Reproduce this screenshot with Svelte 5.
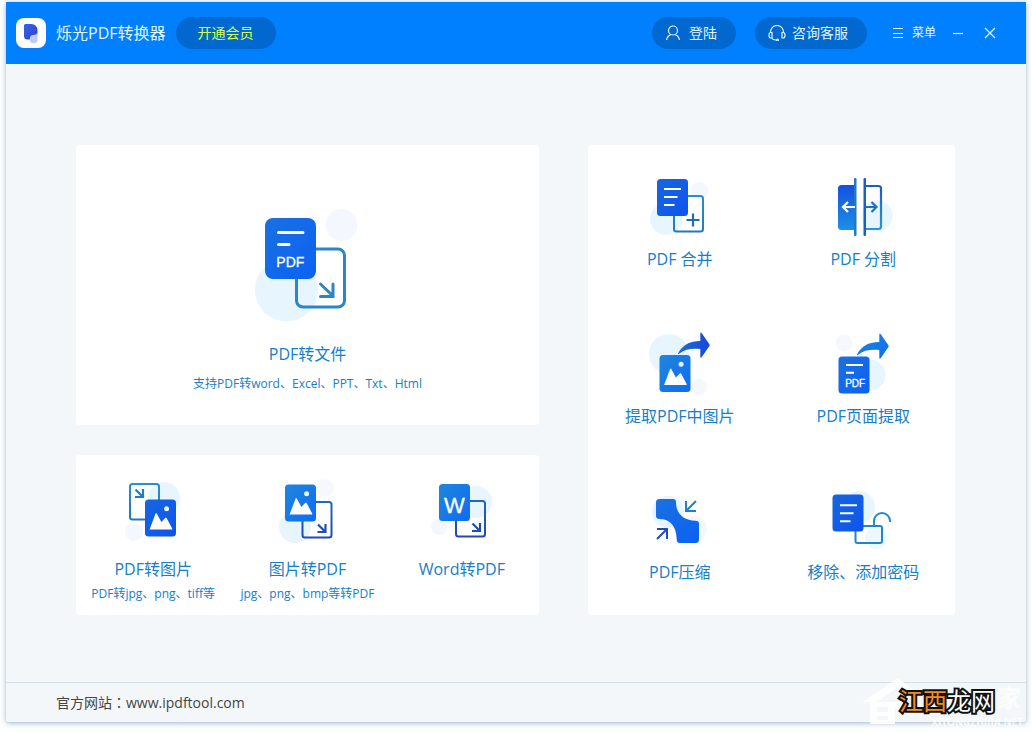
<script lang="ts">
  type Tool = { id: string; title: string; hint?: string };

  const convertTools: Tool[] = [
    { id: "pdf-image", title: "PDF转图片", hint: "PDF转jpg、png、tiff等" },
    { id: "image-pdf", title: "图片转PDF", hint: "jpg、png、bmp等转PDF" },
    { id: "word-pdf", title: "Word转PDF" },
  ];

  const editTools: Tool[] = [
    { id: "merge", title: "PDF 合并" },
    { id: "split", title: "PDF 分割" },
    { id: "extract-image", title: "提取PDF中图片" },
    { id: "extract-page", title: "PDF页面提取" },
    { id: "compress", title: "PDF压缩" },
    { id: "password", title: "移除、添加密码" },
  ];
</script>

{#snippet sheet(x: number, y: number, fill: string)}
  <rect {x} {y} width="31" height="37" rx="3.5" fill="url(#{fill})" />
{/snippet}

{#snippet frame(x: number, y: number, stroke: string)}
  <rect {x} {y} width="29" height="35.5" rx="2.5" fill="none" stroke="url(#{stroke})" stroke-width="2" />
{/snippet}

{#snippet photo(x: number, y: number, fill: string)}
  <g transform="translate({x} {y})">
    {@render sheet(0, 0, fill)}
    <path d="M4.6 30 10.4 14.4Q11.2 12.6 12 14.4L16.4 22.6 20.2 18.4Q21 17.6 21.7 18.8L27.3 29.2Q27.5 30 26.6 30H5Q4.3 30 4.6 29.4z" fill="#fff" />
    <circle cx="21.6" cy="9.2" r="2.5" fill="#e6f5ff" />
  </g>
{/snippet}

{#snippet corner(x: number, y: number, color: string)}
  <path transform="translate({x} {y})" d="M-7.5-7.5 0 0M0-8V0H-8" fill="none" stroke={color} stroke-width="2.2" />
{/snippet}

{#snippet lines(x: number, y: number)}
  <path transform="translate({x} {y})" d="M0 0H17M0 8H13.500M0 16H10.500" stroke="#fff" stroke-width="2" />
{/snippet}

{#snippet share(x: number, y: number, fill: string)}
  <path
    transform="translate({x} {y})"
    d="M0 21C5 12 13 8.500 22.300 8.600V1Q22.500-.8 23.800.8L31.400 11.700Q32 12.600 31.400 13.500L23.800 24.400Q22.500 26 22.300 24.200V16.600C14 15.800 7 16.600.8 21.400Q-.2 21.800 0 21z"
    fill="url(#{fill})"
  />
{/snippet}

{#snippet icon(id: string)}
  <svg class="tool-icon" viewBox="0 0 80 72" aria-hidden="true">
    {#if id === "pdf-image"}
      <circle cx="51" cy="26" r="16" fill="#e6f5fe" />
      <circle cx="21" cy="60" r="9" fill="#f3f7fe" />
      {@render frame(17, 12, "line-light")}
      {@render corner(30, 25, "#1f7cc4")}
      {@render photo(32, 27.5, "fill-deep")}
    {:else if id === "image-pdf"}
      <circle cx="28" cy="55" r="16" fill="#e6f5fe" />
      <circle cx="58" cy="16" r="9" fill="#f6f8fe" />
      {@render frame(35.5, 30, "line-deep")}
      {@render corner(58.5, 60, "#1f4fae")}
      {@render photo(18, 12.5, "fill-light")}
    {:else if id === "word-pdf"}
      <circle cx="54" cy="30" r="16" fill="#e6f5fe" />
      <circle cx="17" cy="55" r="8" fill="#f4f7fe" />
      {@render frame(34, 29, "line-deep")}
      {@render corner(58, 59, "#1f4fae")}
      {@render sheet(17, 12, "fill-light")}
      <text x="32.500" y="41" font-size="22" text-anchor="middle">W</text>
    {:else if id === "merge"}
      <circle cx="26" cy="48" r="16" fill="#e6f5fe" />
      <circle cx="59" cy="20" r="9" fill="#f3f8fe" />
      {@render frame(34, 25, "line-light")}
      {@render sheet(17, 8, "fill-deep")}
      {@render lines(24, 18)}
      <path d="M46.500 49H59.500M53 42.500V55.500" stroke="#1f6cb8" stroke-width="2.200" />
    {:else if id === "split"}
      <circle cx="54" cy="45" r="15.500" fill="#e6f5fe" />
      <path d="M32 14V59H18.500Q15 59 15 55.500V17.500Q15 14 18.500 14z" fill="url(#fill-split)" />
      <rect x="31" y="7" width="2.500" height="58" rx="1" fill="#2378c4" />
      <path d="M42 15H55.500Q58 15 58 17.500V55.500Q58 58 55.500 58H42" fill="none" stroke="url(#line-split)" stroke-width="2.200" />
      <rect x="40.500" y="7" width="2.500" height="58" rx="1" fill="#1d5fc0" />
      <path d="M32 36H20.500M25 31 20 36 25 41" fill="none" stroke="#fff" stroke-width="2.200" />
      <path d="M42 36H53M48.500 31 53.500 36 48.500 41" fill="none" stroke="#1d6fc4" stroke-width="2.200" />
    {:else if id === "extract-image"}
      <circle cx="29" cy="26" r="20" fill="#e6f5fe" />
      <circle cx="59" cy="59" r="8" fill="#f5f7fe" />
      {@render photo(19.5, 27, "fill-light")}
      {@render share(38, 4.5, "fill-arrow")}
    {:else if id === "extract-page"}
      <circle cx="47" cy="47" r="15.500" fill="#e6f5fe" />
      <circle cx="21" cy="15" r="8.500" fill="#f6f8fe" />
      {@render sheet(15.5, 28.5, "fill-page")}
      {@render share(34, 5.5, "fill-light")}
      <path d="M23 37H40M23 44.700H31" stroke="#fff" stroke-width="2" />
      <text x="32.200" y="58.500" font-size="10" text-anchor="middle">PDF</text>
    {:else if id === "compress"}
      <circle cx="28" cy="28" r="16" fill="#e6f5fe" />
      <circle cx="54" cy="45" r="13" fill="#f0f8fe" />
      <path
        d="M19.500 15H33Q36 15 36 18C36 30 44 36.700 55.500 36.700Q59 36.700 59 40V55.500Q59 59 55.500 59H40Q36.700 59 36.700 55.500C36.500 42 30 35 19.500 35Q16 35 16 32V18.500Q16 15 19.500 15z"
        fill="url(#fill-page)"
      />
      <path d="M56 17 46.500 26.500M46 17V27H56" fill="none" stroke="#1f80c8" stroke-width="2" />
      <path d="M17 55 26.500 45.500M17 45H27V55" fill="none" stroke="#1f4bc0" stroke-width="2" />
    {:else if id === "password"}
      <circle cx="36" cy="23" r="16" fill="#e6f5fe" />
      <circle cx="53" cy="54" r="11" fill="#ecf8fe" />
      <rect x="32.500" y="42" width="26.500" height="17" rx="2" fill="none" stroke="#2385c8" stroke-width="2" />
      {@render sheet(9.5, 10.5, "fill-deep")}
      {@render lines(17, 21.3)}
      <path d="M51 42V37A8 8 0 0 1 67 37V38" fill="none" stroke="#2388cc" stroke-width="2" />
    {/if}
  </svg>
{/snippet}

{#snippet tool(item: Tool)}
  <button class="tool" type="button">
    {@render icon(item.id)}
    <span class="tool-title">{item.title}</span>
    {#if item.hint}
      <span class="tool-hint">{item.hint}</span>
    {/if}
  </button>
{/snippet}

<svg class="defs" width="0" height="0" aria-hidden="true">
  <defs>
    <linearGradient id="fill-deep" x1="0" y1="0" x2="1" y2="1">
      <stop offset="0" stop-color="#1766e0" />
      <stop offset="1" stop-color="#0e54ee" />
    </linearGradient>
    <linearGradient id="fill-light" x1="0" y1="0" x2="1" y2="1">
      <stop offset="0" stop-color="#1f86dc" />
      <stop offset="1" stop-color="#0d6cf4" />
    </linearGradient>
    <linearGradient id="fill-page" x1="0" y1="0" x2="1" y2="1">
      <stop offset="0" stop-color="#1b70e0" />
      <stop offset="1" stop-color="#0a62f4" />
    </linearGradient>
    <linearGradient id="fill-arrow" x1="0" y1="0" x2="1" y2="0">
      <stop offset="0" stop-color="#1f6ed0" />
      <stop offset="1" stop-color="#1645e0" />
    </linearGradient>
    <linearGradient id="fill-split" x1="0" y1="0" x2="0" y2="1">
      <stop offset="0" stop-color="#1650de" />
      <stop offset="1" stop-color="#1c90e6" />
    </linearGradient>
    <linearGradient id="line-split" x1="0" y1="0" x2="0" y2="1">
      <stop offset="0" stop-color="#1b5cc4" />
      <stop offset="1" stop-color="#2b94dc" />
    </linearGradient>
    <linearGradient id="line-light" x1="0" y1="0" x2="0" y2="1">
      <stop offset="0" stop-color="#2a8ed0" />
      <stop offset="1" stop-color="#2278c0" />
    </linearGradient>
    <linearGradient id="line-deep" x1="0" y1="0" x2="0" y2="1">
      <stop offset="0" stop-color="#2467b4" />
      <stop offset="1" stop-color="#2148b4" />
    </linearGradient>
    <linearGradient id="logo-mark" x1="0" y1="0" x2="1" y2="1">
      <stop offset="0" stop-color="#3a62e8" />
      <stop offset="1" stop-color="#2b44d0" />
    </linearGradient>
  </defs>
</svg>

<div class="window">
  <header class="titlebar">
    <svg class="logo" viewBox="0 0 30 30" aria-hidden="true">
      <rect width="30" height="30" rx="8" fill="#fff" />
      <path d="M9.500 6H15.500A6 6 0 0 1 21.500 12V14.500A4 4 0 0 1 17.500 18.500L14 21.500H11.500A3.500 3.500 0 0 1 8 18V7.500Q8 6 9.500 6z" fill="url(#logo-mark)" />
      <path d="M21.500 14.500V21.500A3.800 3.800 0 0 1 13.800 21.500V20.500A3.500 3.500 0 0 1 17.300 17Q20.500 17 21.500 14.500z" fill="#bccdf2" />
    </svg>
    <h1 class="app-name">烁光PDF转换器</h1>
    <button class="pill pill-vip" type="button">开通会员</button>

    <button class="pill pill-login" type="button">
      <svg width="16" height="16" viewBox="0 0 16 16" aria-hidden="true">
        <circle cx="8" cy="5.500" r="4.500" />
        <path d="M1.500 15Q2.500 10.500 6 9.600M14.500 15Q13.500 10.500 10 9.600" />
      </svg>
      登陆
    </button>
    <button class="pill pill-service" type="button">
      <svg width="18" height="16" viewBox="0 0 18 16" aria-hidden="true">
        <path d="M2.500 7A6.500 6.500 0 0 1 15.500 7M4 7.500V13H3Q1 13 1 10.200T3 7.500zM14 7.500V13H15Q17 13 17 10.200T15 7.500zM3.500 13Q5 15 8 15" />
        <circle cx="9.500" cy="15" r="1" />
      </svg>
      咨询客服
    </button>
    <button class="menu" type="button">
      <svg width="12" height="12" viewBox="0 0 12 12" aria-hidden="true">
        <path d="M1 1.500H11M1 6.500H11M1 10.500H11" />
      </svg>
      菜单
    </button>
    <button class="control" type="button" aria-label="最小化">
      <svg width="12" height="12" viewBox="0 0 12 12" aria-hidden="true">
        <path d="M1 6.500H11" />
      </svg>
    </button>
    <button class="control" type="button" aria-label="关闭">
      <svg width="12" height="12" viewBox="0 0 12 12" aria-hidden="true">
        <path d="M1 1 11 11M11 1 1 11" />
      </svg>
    </button>
  </header>

  <main class="content">
    <div class="column">
      <section class="card">
        <button class="tool tool-main" type="button">
          <svg class="main-icon" viewBox="0 0 112 116" aria-hidden="true">
            <circle cx="34.500" cy="82" r="31.500" fill="#e6f5fe" />
            <circle cx="89.500" cy="17" r="16" fill="#f5f7fe" />
            <rect x="44.500" y="41" width="48" height="58" rx="6.500" fill="none" stroke="#2b85c8" stroke-width="3" />
            <rect x="13" y="10" width="51" height="61" rx="8" fill="url(#fill-page)" />
            <path d="M26.500 24.500H51M26.500 36.500H37" stroke="#fff" stroke-width="3" stroke-linecap="round" />
            <text x="38.300" y="58.700" font-size="14" text-anchor="middle">PDF</text>
            <path d="M68.500 76 80.500 87.500M81 76V88.500H68.500" fill="none" stroke="#2b85c8" stroke-width="3" stroke-linecap="round" />
          </svg>
          <span class="tool-title">PDF转文件</span>
          <span class="tool-hint">支持PDF转word、Excel、PPT、Txt、Html</span>
        </button>
      </section>
      <section class="card card-convert">
        {#each convertTools as item}
          {@render tool(item)}
        {/each}
      </section>
    </div>
    <section class="card card-edit">
      {#each editTools as item}
        {@render tool(item)}
      {/each}
    </section>
  </main>

  <footer class="footer">
    <span>官方网站：<a href="http://www.ipdftool.com">www.ipdftool.com</a></span>
  </footer>

  <div class="watermark">
    <svg class="house" viewBox="0 0 56 48" aria-hidden="true">
      <path d="M0 25 37 0 56 15V22L37 9 16 24H0z" fill="#fff" />
      <path d="M9 24H40V30H34V46H9zM16 29V34H27V29zM16 38V42H27V38z" fill="#fff" fill-rule="evenodd" />
    </svg>
    <span class="site-name"><b>江西</b>龙网</span>
    <span class="home">家</span>
    <span class="domain">XITONGZHIJIA.NET</span>
  </div>
</div>

<style>
  :global(body) {
    background: #fcfeff;
    font-family: "Open Sans", "Noto Sans CJK SC", sans-serif;
  }
  button {
    padding: 0;
    border: 0;
    background: none;
    font-family: inherit;
    cursor: pointer;
  }
  .defs {
    position: absolute;
  }
  .window {
    position: relative;
    display: flex;
    flex-direction: column;
    box-sizing: border-box;
    min-height: calc(100vh - 13px);
    margin: 2px 6px 11px;
    background: #f4f7f9;
    border-radius: 0 0 3px 3px;
    box-shadow: 0 1px 5px rgba(60, 110, 160, 0.5);
  }
  .titlebar {
    display: flex;
    align-items: center;
    height: 62px;
    padding: 0 30px 0 10px;
    background: #0080ff;
    color: #e2f6ff;
  }
  .titlebar svg {
    flex: none;
  }
  .titlebar button svg {
    fill: none;
    stroke: currentColor;
    stroke-width: 1.2;
  }
  .logo {
    width: 30px;
    height: 30px;
  }
  .app-name {
    margin: 0 10px;
    font-size: 16px;
    font-weight: 400;
    line-height: 24px;
    white-space: nowrap;
  }
  .pill {
    display: flex;
    align-items: center;
    justify-content: center;
    gap: 8px;
    box-sizing: border-box;
    height: 32px;
    border-radius: 16px;
    background: #0068cf;
    color: #e2f6ff;
    font-size: 14px;
    line-height: 20px;
    white-space: nowrap;
  }
  .pill-vip {
    width: 100px;
    color: #d8ff4a;
  }
  .pill-login {
    width: 84px;
    margin-left: auto;
    padding-right: 6px;
  }
  .pill-service {
    gap: 6px;
    width: 112px;
    margin-left: 19px;
    padding-right: 6px;
  }
  .menu {
    display: flex;
    align-items: center;
    gap: 8px;
    margin-left: 25px;
    color: #e2f6ff;
    font-size: 12px;
    line-height: 18px;
    white-space: nowrap;
  }
  .control {
    display: flex;
    margin-left: 16px;
    color: #e2f6ff;
  }
  .control + .control {
    margin-left: 20px;
  }
  .content {
    flex: 1;
    display: grid;
    grid-template-columns: 463fr 367fr;
    align-items: start;
    gap: 49px;
    padding: 81px 71px 67px 70px;
  }
  .column {
    display: flex;
    flex-direction: column;
    gap: 30px;
  }
  .card {
    display: grid;
    background: #fff;
    border-radius: 4px;
  }
  .card-convert {
    grid-template-columns: repeat(3, 1fr);
    min-height: 160px;
  }
  .card-edit {
    grid-template-columns: repeat(2, 1fr);
    grid-template-rows: repeat(3, 1fr);
    min-height: 470px;
  }
  .tool {
    display: flex;
    flex-direction: column;
    align-items: center;
    color: #1580c8;
  }
  .tool-main {
    padding: 63px 0 32px;
  }
  .card-convert .tool {
    padding-top: 17px;
  }
  .card-edit .tool {
    padding-top: 26px;
  }
  .tool-icon {
    width: 80px;
    height: 72px;
  }
  .main-icon {
    width: 112px;
    height: 116px;
  }
  .tool-icon text,
  .main-icon text {
    fill: #fff;
    stroke: #fff;
    stroke-width: 0.3;
    font-family: "Liberation Sans", sans-serif;
  }
  .tool-title {
    margin-top: 4px;
    font-size: 16px;
    line-height: 24px;
    white-space: nowrap;
  }
  .card-convert .tool-title {
    margin-top: 13px;
  }
  .tool-main .tool-title {
    margin-top: 18px;
  }
  .tool-hint {
    margin-top: 4px;
    font-size: 12px;
    line-height: 18px;
    white-space: nowrap;
  }
  .tool-main .tool-hint {
    margin-top: 9px;
  }
  .footer {
    display: flex;
    align-items: center;
    height: 39px;
    padding-left: 50px;
    border-top: 1px solid #d3dfe7;
    color: #444;
    font-family: "Open Sans", "Noto Sans CJK TC", sans-serif;
    font-size: 14px;
    line-height: 20px;
  }
  .footer a {
    color: inherit;
    text-decoration: none;
  }
  .watermark {
    position: absolute;
    right: 3px;
    bottom: -4px;
    display: grid;
    grid-template-columns: 38px 98px 26px;
    grid-template-rows: 40px 8px;
    color: #fff;
    pointer-events: none;
  }
  .house {
    grid-area: 1 / 1 / 3 / 2;
    width: 56px;
    height: 48px;
    opacity: 0.9;
  }
  .site-name {
    position: relative;
    align-self: center;
    padding-top: 6px;
    font-size: 24px;
    line-height: 28px;
    white-space: nowrap;
    -webkit-text-stroke: 4px #111;
    paint-order: stroke fill;
  }
  .site-name b {
    color: #f58a1c;
    font-weight: 400;
  }
  .home {
    align-self: center;
    font-size: 24px;
    font-weight: 700;
    line-height: 28px;
    opacity: 0.8;
  }
  .domain {
    grid-area: 2 / 2 / 3 / 4;
    justify-self: end;
    font-size: 10px;
    font-weight: 700;
    line-height: 8px;
    opacity: 0.8;
  }
</style>
